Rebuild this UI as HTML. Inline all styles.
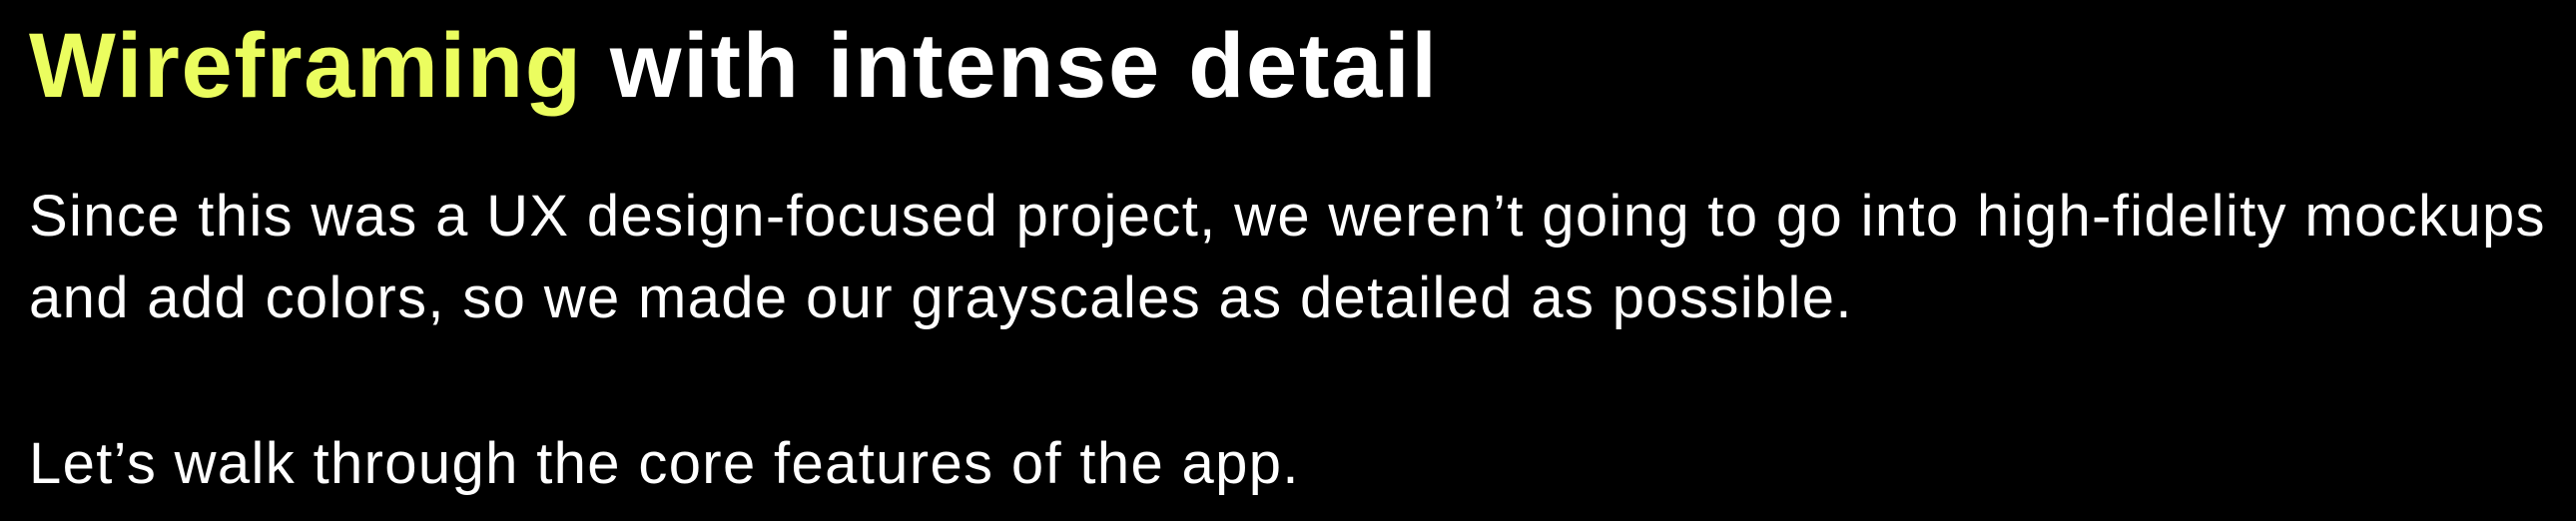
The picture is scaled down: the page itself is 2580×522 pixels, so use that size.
<!DOCTYPE html>
<html><head><meta charset="utf-8"><style>
html,body{margin:0;padding:0;background:#000;width:2580px;height:522px;overflow:hidden}
.t{position:absolute;left:29px;white-space:nowrap;font-family:"Liberation Sans",sans-serif;color:#fff;line-height:1}
h1{margin:0;font-size:92px;font-weight:bold;top:20px;letter-spacing:1.7px}
h1 span{color:#ebfd5f}
.p{font-size:58px;letter-spacing:1.35px}
</style></head><body>
<h1 class="t"><span>Wireframing</span> with intense detail</h1>
<div class="t p" style="top:188px">Since this was a UX design-focused project, we weren’t going to go into high-fidelity mockups</div>
<div class="t p" style="top:270px">and add colors, so we made our grayscales as detailed as possible.</div>
<div class="t p" style="top:436px">Let’s walk through the core features of the app.</div>
</body></html>
